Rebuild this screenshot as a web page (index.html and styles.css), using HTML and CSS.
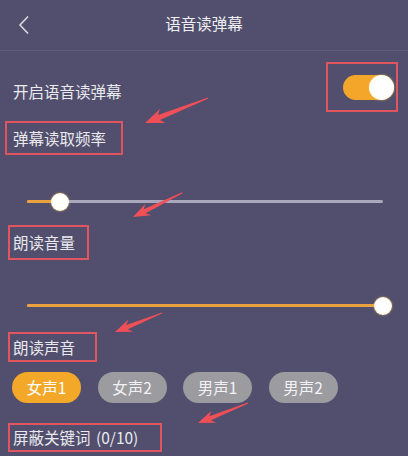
FILE: index.html
```html
<!DOCTYPE html>
<html lang="zh-CN">
<head>
    <meta charset="UTF-8">
    <meta name="viewport" content="width=device-width, initial-scale=1.0">
    <title>语音读弹幕</title>
    <link rel="stylesheet" href="styles.css">
</head>
<body>
    <div class="page">
        <div class="header">
            <div class="back">
                <svg width="12" height="20" viewBox="0 0 12 20">
                    <polyline points="10,1.5 2,10 10,18.5" fill="none" stroke="#d9d9e2" stroke-width="1.6"/>
                </svg>
            </div>
            <div class="title">语音读弹幕</div>
            <div></div>
        </div>

        <div class="content">
            <!-- 开关 -->
            <div class="switch-row">
                <span class="switch-label">开启语音读弹幕</span>
                <div class="mark mark-switch">
                    <div class="toggle"><span class="knob"></span></div>
                </div>
            </div>

            <!-- 读取频率 -->
            <div class="mark mark-rate">弹幕读取频率</div>
            <div class="slider slider-rate">
                <div class="fill" style="width: 9.3%"></div>
            </div>

            <!-- 音量 -->
            <div class="mark mark-volume">朗读音量</div>
            <div class="slider slider-volume">
                <div class="fill" style="width: 100%"></div>
            </div>

            <!-- 声音 -->
            <div class="mark mark-voice">朗读声音</div>
            <div class="chips">
                <span class="chip active">女声1</span>
                <span class="chip">女声2</span>
                <span class="chip">男声1</span>
                <span class="chip">男声2</span>
            </div>

            <div class="mark mark-keyword">屏蔽关键词 (0/10)</div>
        </div>

        <!-- annotation arrows -->
        <svg class="arrows" width="408" height="456" viewBox="0 0 408 456">
            <g fill="#ef4f57">
                <polygon transform="translate(145 123) rotate(158.4)" points="0,0 -19,-7.5 -15,-2.6 -68,-0.6 -68,0.6 -15,2.6 -19,7.5"/>
                <polygon transform="translate(133 217) rotate(153.9)" points="0,0 -17,-6.5 -13,-2.2 -55,-0.5 -55,0.5 -13,2.2 -17,6.5"/>
                <polygon transform="translate(115 332) rotate(158)" points="0,0 -17,-6.5 -13,-2.2 -51,-0.5 -51,0.5 -13,2.2 -17,6.5"/>
                <polygon transform="translate(198 423) rotate(158.2)" points="0,0 -17,-6.5 -13,-2.2 -54,-0.5 -54,0.5 -13,2.2 -17,6.5"/>
            </g>
        </svg>
    </div>
</body>
</html>
```

FILE: styles.css
```css
* {
    margin: 0;
    padding: 0;
    box-sizing: border-box;
    font-family: "Noto Sans CJK SC", "Noto Sans", sans-serif;
}

body {
    background-color: #514f6d;
    overflow: hidden;
}

.page {
    position: relative;
    width: 408px;
    height: 456px;
    color: #e9e9ee;
    font-size: 15.5px;
}

.header {
    display: grid;
    grid-template-columns: 50px 1fr 50px;
    align-items: center;
    height: 51px;
    border-bottom: 1px solid #5f5e7b;
}

.back {
    padding-left: 18px;
    display: flex;
    align-items: center;
}

.title {
    text-align: center;
    color: #f0f0f4;
    padding-bottom: 4px;
}

.content {
    padding: 0 10px 0 13px;
}

.switch-row {
    display: flex;
    justify-content: space-between;
    align-items: center;
    margin-top: 11px;
    height: 50px;
}

.switch-label {
    padding-top: 7px;
}

/* red annotation boxes */
.mark {
    border: 2px solid #e2545e;
    width: fit-content;
}

.mark-switch {
    display: flex;
    align-items: center;
    justify-content: flex-end;
    width: 72px;
    height: 50px;
    padding-right: 2px;
}

.mark-rate {
    margin: 9px 0 0 -8px;
    padding: 0 15px 0 6px;
    line-height: 30px;
}

.mark-volume {
    margin: 22px 0 0 -5px;
    padding: 0 12px 0 3px;
    line-height: 31px;
}

.mark-voice {
    margin: 25px 0 0 -5px;
    padding: 0 20px 0 3px;
    line-height: 26px;
}

.mark-keyword {
    margin: 20px 0 0 -5px;
    padding: 0 22px 0 3px;
    line-height: 25px;
    word-spacing: 2px;
}

.toggle {
    display: flex;
    justify-content: flex-end;
    width: 51px;
    height: 25px;
    border-radius: 13px;
    background-color: #f4a62a;
}

.knob {
    width: 25px;
    height: 25px;
    border-radius: 50%;
    background: radial-gradient(circle, #ffffff 60%, #fff4d2 100%);
    box-shadow: 0 0 2px #f8c254;
}

/* sliders */
.slider {
    height: 3px;
    margin: 0 15px 0 14px;
    background-color: #a9a8bd;
    border-radius: 2px;
}

.slider-rate {
    margin-top: 45px;
}

.slider-volume {
    margin-top: 44px;
}

.fill {
    position: relative;
    height: 100%;
    background-color: #e9a23d;
    border-radius: 2px;
}

.fill::after {
    content: "";
    position: absolute;
    right: -9px;
    top: -7.5px;
    width: 18px;
    height: 18px;
    border-radius: 50%;
    background: radial-gradient(circle, #ffffff 55%, #fff2c6 85%, #f6c35c 100%);
    box-shadow: 0 0 2px #f2b540;
}

.chips {
    display: flex;
    gap: 16.5px;
    margin: 10px 0 0 -1px;
}

.chip {
    width: 69px;
    height: 31px;
    line-height: 31px;
    border-radius: 16px;
    text-align: center;
    font-size: 15.5px;
    background-color: #9b9ba0;
    color: #f2f2f4;
}

.chip.active {
    background-color: #f4a82a;
    color: #ffffff;
}

.arrows {
    position: absolute;
    left: 0;
    top: 0;
    pointer-events: none;
}
```
